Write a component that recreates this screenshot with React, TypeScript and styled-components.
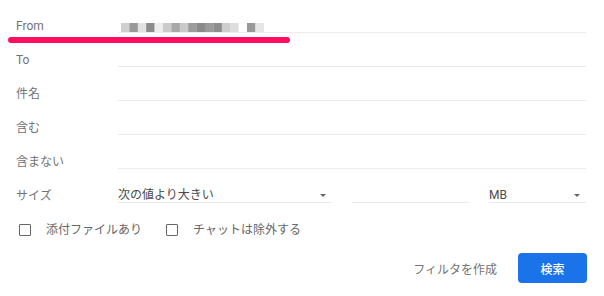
import React from "react";
import styled, { createGlobalStyle } from "styled-components";

const Global = createGlobalStyle`
  html, body { margin: 0; padding: 0; background: #fff; }
  body { font-family: Roboto, "Noto Sans CJK JP", sans-serif; }
`;

const Panel = styled.div`
  position: relative;
  width: 604px;
  height: 296px;
  box-sizing: border-box;
  padding: 0 18px 0 16px;
  background: #fff;
  font-family: Roboto, "Noto Sans CJK JP", sans-serif;
  font-size: 12px;
  color: #737373;
`;

const Row = styled.div`
  display: flex;
  align-items: flex-end;
  height: 34px;
  padding-bottom: 1px;
  box-sizing: border-box;
`;

const Label = styled.div`
  width: 102px;
  flex: none;
  height: 18px;
  box-sizing: border-box;
  padding-top: 3px;
  line-height: 17px;
  color: #737373;
`;

const Field = styled.div<{ $w?: number }>`
  ${(p) => (p.$w ? `width: ${p.$w}px; flex: none;` : "flex: 1;")}
  height: 18px;
  box-sizing: border-box;
  padding-top: 3px;
  border-bottom: 1px solid #ebebeb;
  display: flex;
  align-items: center;
  line-height: 17px;
  color: #4a4a4a;
  position: relative;
`;

const Fields = styled.div`
  flex: 1;
  display: flex;
  gap: 20px;
`;

const Arrow = styled.span`
  margin-left: auto;
  margin-right: 6px;
  width: 0;
  height: 0;
  border-left: 3.5px solid transparent;
  border-right: 3.5px solid transparent;
  border-top: 3.5px solid #666;
`;

const Mosaic = styled.svg`
  margin-left: 3px;
  align-self: flex-end;
`;

const CheckRow = styled.div`
  display: flex;
  align-items: center;
  height: 20px;
  margin-top: 16px;
  padding-left: 3px;
`;

const CheckItem = styled.label`
  display: flex;
  align-items: center;
  gap: 15px;
  margin-right: 24px;
  color: #666;
  line-height: 20px;
`;

const Box = styled.span`
  width: 12px;
  height: 12px;
  box-sizing: border-box;
  border: 1.6px solid #666;
  border-radius: 1px;
  margin-top: -1px;
`;

const Actions = styled.div`
  display: flex;
  justify-content: flex-end;
  align-items: center;
  margin-top: 13px;
  margin-right: -1px;
  gap: 9px;
`;

const TextButton = styled.button`
  border: none;
  background: none;
  font: inherit;
  color: #737373;
  padding: 0 12px;
  height: 30px;
`;

const PrimaryButton = styled.button`
  border: none;
  background: #1a73e8;
  color: #fff;
  font: inherit;
  font-weight: 500;
  width: 69px;
  height: 30px;
  border-radius: 4px;
`;

const Highlight = styled.div`
  position: absolute;
  left: 8px;
  top: 37px;
  width: 282px;
  height: 6px;
  border-radius: 3px;
  background: #ff0d5e;
`;

const shades = [
  "#cfcfcf", "#9a9a9a", "#e2e2e2", "#8c8c8c", "#eeeeee", "#cccccc",
  "#a8a8a8", "#cacaca", "#9c9c9c", "#8a8a8a", "#9a9a9a", "#8c8c8c",
  "#cdcdcd", "#dddddd", "#ffffff", "#999999", "#e6e6e6",
];

function Pixelated() {
  return (
    <Mosaic width={150} height={9} viewBox="0 0 150 9">
      {shades.map((c, i) => (
        <rect key={i} x={i * 8.4} y={0} width={8.6} height={9} fill={c} />
      ))}
    </Mosaic>
  );
}

const textRows = ["To", "件名", "含む", "含まない"];

export default function App() {
  return (
    <>
      <Global />
      <Panel>
        <Row>
          <Label>From</Label>
          <Field>
            <Pixelated />
          </Field>
        </Row>
        {textRows.map((t) => (
          <Row key={t}>
            <Label>{t}</Label>
            <Field />
          </Row>
        ))}
        <Row>
          <Label>サイズ</Label>
          <Fields>
            <Field $w={214}>
              次の値より大きい
              <Arrow />
            </Field>
            <Field $w={117} />
            <Field $w={97}>
              MB
              <Arrow />
            </Field>
          </Fields>
        </Row>
        <CheckRow>
          <CheckItem>
            <Box />
            添付ファイルあり
          </CheckItem>
          <CheckItem>
            <Box />
            チャットは除外する
          </CheckItem>
        </CheckRow>
        <Actions>
          <TextButton>フィルタを作成</TextButton>
          <PrimaryButton>検索</PrimaryButton>
        </Actions>
        <Highlight />
      </Panel>
    </>
  );
}
